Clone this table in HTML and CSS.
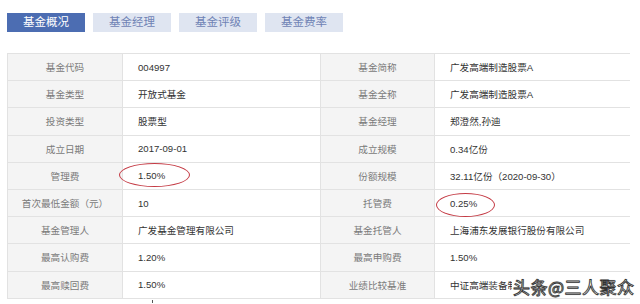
FILE: index.html
```html
<!DOCTYPE html>
<html lang="zh">
<head>
<meta charset="utf-8">
<link rel="stylesheet" href="styles.css">
</head>
<body>
<div class="page">
  <div class="tabs">
    <div class="tab active">基金概况</div>
    <div class="tab">基金经理</div>
    <div class="tab">基金评级</div>
    <div class="tab">基金费率</div>
  </div>
  <div class="grid">
    <div class="lab">基金代码</div><div class="val">004997</div>
    <div class="lab">基金简称</div><div class="val">广发高端制造股票A</div>
    <div class="lab">基金类型</div><div class="val">开放式基金</div>
    <div class="lab">基金全称</div><div class="val">广发高端制造股票A</div>
    <div class="lab">投资类型</div><div class="val">股票型</div>
    <div class="lab">基金经理</div><div class="val">郑澄然,孙迪</div>
    <div class="lab">成立日期</div><div class="val">2017-09-01</div>
    <div class="lab">成立规模</div><div class="val">0.34亿份</div>
    <div class="lab">管理费</div><div class="val">1.50%</div>
    <div class="lab">份额规模</div><div class="val">32.11亿份（2020-09-30）</div>
    <div class="lab">首次最低金额（元）</div><div class="val">10</div>
    <div class="lab">托管费</div><div class="val">0.25%</div>
    <div class="lab">基金管理人</div><div class="val">广发基金管理有限公司</div>
    <div class="lab">基金托管人</div><div class="val">上海浦东发展银行股份有限公司</div>
    <div class="lab">最高认购费</div><div class="val">1.20%</div>
    <div class="lab">最高申购费</div><div class="val">1.50%</div>
    <div class="lab">最高赎回费</div><div class="val">1.50%</div>
    <div class="lab">业绩比较基准</div><div class="val"><span class="clip">中证高端装备制造指数收益率*80%</span></div>
  </div>
  <div class="ring ring1"></div>
  <div class="ring ring2"></div>
  <div class="tick"></div>
  <div class="watermark">头条@三人聚众</div>
</div>
</body>
</html>
```
FILE: styles.css
```css
html, body {
  margin: 0;
  padding: 0;
  background: #ffffff;
}
.page {
  position: relative;
  width: 640px;
  height: 304px;
  overflow: hidden;
  padding: 13px 0 0 7px;
  box-sizing: border-box;
  font-family: "Liberation Sans", Arial, "Noto Sans CJK SC", sans-serif;
}
.tabs {
  display: flex;
  gap: 8px;
}
.tab {
  width: 78px;
  height: 19px;
  line-height: 19px;
  text-align: center;
  font-size: 11.5px;
  background: #dfe5f1;
  color: #6f83b5;
}
.tab.active {
  background: #4c6db2;
  color: #ffffff;
}
.grid {
  margin-top: 21px;
  width: 623px;
  box-sizing: border-box;
  display: grid;
  grid-template-columns: 114px 197px 113px 195px;
  grid-auto-rows: 26.2px;
  gap: 1px;
  padding: 1px;
  background: #e2e2e2;
}
.lab, .val {
  display: flex;
  align-items: center;
  font-size: 9.6px;
  white-space: nowrap;
  overflow: hidden;
}
.lab {
  background: #f4f4f4;
  color: #7a7a7a;
  justify-content: center;
}
.val {
  background: #ffffff;
  color: #333333;
  padding-left: 15px;
}
.clip {
  display: block;
  width: 62px;
  overflow: hidden;
}
.ring {
  position: absolute;
  border: 1px solid #c43a44;
  border-radius: 50%;
  box-sizing: border-box;
}
.ring1 {
  left: 119px;
  top: 163px;
  width: 71px;
  height: 24px;
}
.ring2 {
  left: 436px;
  top: 193px;
  width: 59px;
  height: 24px;
}
.tick {
  position: absolute;
  left: 152px;
  top: 300px;
  width: 1px;
  height: 3px;
  background: #555555;
}
.watermark {
  position: absolute;
  left: 513px;
  top: 275px;
  font-family: "Noto Sans CJK SC", sans-serif;
  font-size: 17px;
  line-height: 24px;
  letter-spacing: 0.5px;
  color: #ffffff;
  white-space: nowrap;
  -webkit-text-stroke: 0.8px #333333;
  text-shadow: 0 0 1px #333333;
}
```
